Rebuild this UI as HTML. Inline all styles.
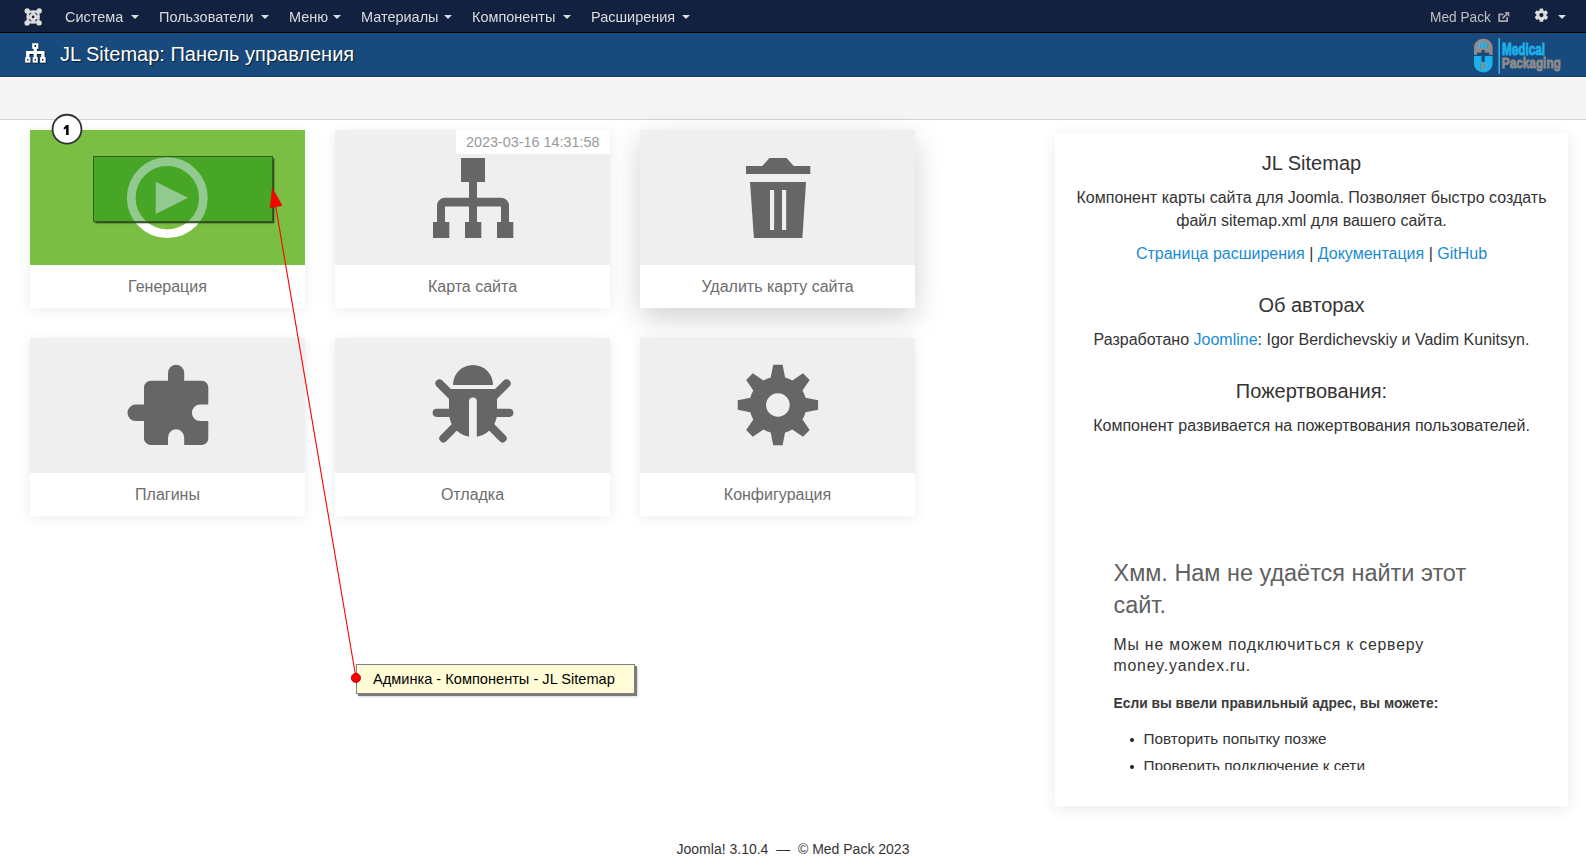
<!DOCTYPE html>
<html><head><meta charset="utf-8">
<style>
html,body{margin:0;padding:0;}
body{width:1586px;height:866px;overflow:hidden;position:relative;background:#fff;font-family:"Liberation Sans",sans-serif;}
.abs{position:absolute;}
#nav{left:0;top:0;width:1586px;height:32px;background:#11213f;border-bottom:1px solid #000;}
.ni{position:absolute;top:8.7px;font-size:15px;line-height:16px;color:#dcdcdc;white-space:nowrap;transform:scaleX(0.965);transform-origin:0 0;}
.caret{position:absolute;top:15px;width:0;height:0;border-left:4px solid transparent;border-right:4px solid transparent;border-top:4px solid #dcdcdc;}
#hdr{left:0;top:33px;width:1586px;height:43px;background:#184a7d;border-bottom:1px solid #0a3a6e;}
#sub{left:0;top:77px;width:1586px;height:41px;background:#f5f5f5;border-top:1px solid #fff;border-bottom:1px solid #d4d4d4;}
.card{position:absolute;width:275px;height:178px;background:#fff;box-shadow:0 2px 12px rgba(0,0,0,0.08);}
.card .ic{position:absolute;left:0;top:0;width:275px;height:135px;background:#efefef;}
.card .lb{position:absolute;left:0;top:135px;width:275px;height:43px;text-align:center;font-size:16px;line-height:43px;color:#6d6d6d;}
#panel{left:1055px;top:133px;width:513px;height:673px;background:#fff;box-shadow:0 3px 16px rgba(0,0,0,0.085);}
.pc{position:absolute;left:0;width:513px;text-align:center;color:#333;white-space:nowrap;}
.lk{color:#1a8bd0;}
#foot{left:0;top:841px;width:1586px;font-size:14px;color:#333;}
</style></head><body>

<div id="nav" class="abs">
  <svg class="abs" style="left:0;top:0" width="1586" height="32" viewBox="0 0 1586 32">
  <g fill="#050a15" opacity="0.55" transform="translate(0.5,0.7)">
    <circle cx="27.2" cy="11" r="2.7"/><circle cx="39.2" cy="10.9" r="2.7"/><circle cx="27.1" cy="23" r="2.7"/><circle cx="39.1" cy="22.9" r="2.7"/>
    <path d="M27.2,11 Q33.2,9.6 39.2,10.9 Q40.6,17 39.1,22.9 Q33.1,24.3 27.1,23 Q25.6,17 27.2,11 Z"/>
  </g>
  <g fill="#dcdcdc">
    <circle cx="27.2" cy="11" r="2.7"/><circle cx="39.2" cy="10.9" r="2.7"/><circle cx="27.1" cy="23" r="2.7"/><circle cx="39.1" cy="22.9" r="2.7"/>
    <path d="M27.2,11 Q33.2,9.6 39.2,10.9 Q40.6,17 39.1,22.9 Q33.1,24.3 27.1,23 Q25.6,17 27.2,11 Z"/>
  </g>
  <g stroke="#11213f" stroke-width="1.1" stroke-linecap="round" opacity="0.85">
    <line x1="29.4" y1="14.6" x2="30.8" y2="13.2"/><line x1="35.6" y1="13.2" x2="37" y2="14.6"/>
    <line x1="29.4" y1="19.5" x2="30.8" y2="20.9"/><line x1="35.6" y1="20.9" x2="37" y2="19.5"/>
  </g>
  <circle cx="33.1" cy="16.9" r="1.3" fill="#11213f"/>
  <!-- external link icon -->
  <g stroke="#a6a6a6" stroke-width="1.8" fill="none">
    <polyline points="1503.5,14.3 1499.2,14.3 1499.2,21.2 1507.1,21.2 1507.1,17.2"/>
    <line x1="1502.5" y1="18.3" x2="1507.5" y2="13.3"/>
  </g>
  <polygon points="1504.4,12.1 1509.3,12.1 1509.3,17" fill="#a6a6a6"/>
  <!-- gear 6 teeth -->
  <g fill="#dcdcdc">
    <circle cx="1541.4" cy="15.1" r="5.2"/>
    <rect x="1539.6" y="8.4" width="3.6" height="13.4" rx="0.6"/>
    <rect x="1539.6" y="8.4" width="3.6" height="13.4" rx="0.6" transform="rotate(60 1541.4 15.1)"/>
    <rect x="1539.6" y="8.4" width="3.6" height="13.4" rx="0.6" transform="rotate(120 1541.4 15.1)"/>
  </g>
  <circle cx="1541.4" cy="15.1" r="2.1" fill="#11213f"/>
</svg>
  <div class="ni" style="left:65px">Система</div><div class="caret" style="left:131px"></div>
  <div class="ni" style="left:159px">Пользователи</div><div class="caret" style="left:261px"></div>
  <div class="ni" style="left:289px">Меню</div><div class="caret" style="left:333px"></div>
  <div class="ni" style="left:361px">Материалы</div><div class="caret" style="left:444px"></div>
  <div class="ni" style="left:472px">Компоненты</div><div class="caret" style="left:563px"></div>
  <div class="ni" style="left:591px">Расширения</div><div class="caret" style="left:682px"></div>
  <div class="ni" style="left:1430px;font-size:14.2px;top:8.5px;color:#c0c0c0">Med Pack</div>
  <div class="caret" style="left:1558px"></div>
</div>

<div id="hdr" class="abs">
  <svg class="abs" style="left:0;top:-33px" width="1586" height="77" viewBox="0 0 1586 77">
    <defs><filter id="ds" x="-20%" y="-20%" width="140%" height="140%"><feDropShadow dx="1" dy="1" stdDeviation="0.5" flood-color="#000" flood-opacity="0.65"/></filter></defs>
    <g filter="url(#ds)" fill="#fff">
      <path fill-rule="evenodd" d="M32.2,43.2 H38.2 V48.7 H36.8 V51.1 H44.4 V57.2 H45.5 V62.4 H40.1 V57.2 H41.2 V53.9 H36.8 V57.2 H37.7 V62.4 H32.7 V57.2 H33.7 V53.9 H29.2 V57.2 H30.3 V62.4 H25.2 V57.2 H26.1 V51.1 H33.7 V48.7 H32.2 Z
        M34.3,45 H36.1 V46.9 H34.3 Z M27,59 H28.5 V60.7 H27 Z M34.4,59 H36 V60.7 H34.4 Z M42,59 H43.6 V60.7 H42 Z"/>
    </g>
    <!-- Medical Packaging logo -->
    <path d="M1474,54.8 V47 A9.3,8.3 0 0 1 1492.6,47 V54.8 Z" fill="#8c8c8c"/>
    <path d="M1474,56 V64 A9.3,8.5 0 0 0 1492.6,64 V56 Z" fill="#1cb1ec"/>
    <rect x="1477" y="52.6" width="12.2" height="3.4" fill="#184a7d"/>
    <rect x="1481.5" y="50" width="3.3" height="11.8" fill="#184a7d"/>
    <text x="1478.8" y="47.6" font-family="Liberation Sans" font-weight="bold" font-size="8.5" fill="#1cb1ec" stroke="#1cb1ec" stroke-width="0.5" textLength="8.8" lengthAdjust="spacingAndGlyphs">m</text>
    <text x="1480.6" y="68" font-family="Liberation Sans" font-weight="bold" font-size="9.5" fill="#8c8c8c" stroke="#8c8c8c" stroke-width="0.4">p</text>
    <rect x="1498.4" y="38" width="1.6" height="35.7" fill="#2ab3ea"/>
    <text x="1502" y="55.1" font-family="Liberation Sans" font-weight="bold" font-size="16" fill="#1cb1ec" stroke="#1cb1ec" stroke-width="0.9" textLength="43" lengthAdjust="spacingAndGlyphs">Medical</text>
    <text x="1501.8" y="68.2" font-family="Liberation Sans" font-weight="bold" font-size="14.5" fill="#8c8c8c" stroke="#8c8c8c" stroke-width="0.8" textLength="59" lengthAdjust="spacingAndGlyphs">Packaging</text>
  </svg>
  <div class="abs" style="left:60px;top:10px;font-size:20px;line-height:22px;color:#fff;text-shadow:1px 1px 1px rgba(0,0,0,0.6);white-space:nowrap">JL Sitemap: Панель управления</div>
</div>

<div id="sub" class="abs"></div>

<div class="card" style="left:30px;top:130px"><div class="ic" style="background:#7abf43"></div><div class="lb">Генерация</div></div>
<div class="card" style="left:335px;top:130px"><div class="ic"></div><div class="lb">Карта сайта</div></div>
<div class="card" style="left:640px;top:130px;box-shadow:0 10px 28px rgba(0,0,0,0.18)"><div class="ic"></div><div class="lb">Удалить карту сайта</div></div>
<div class="card" style="left:30px;top:338px"><div class="ic"></div><div class="lb">Плагины</div></div>
<div class="card" style="left:335px;top:338px"><div class="ic"></div><div class="lb">Отладка</div></div>
<div class="card" style="left:640px;top:338px"><div class="ic"></div><div class="lb">Конфигурация</div></div>


<!-- card icons -->
<svg class="abs" style="left:0;top:0" width="1586" height="866" viewBox="0 0 1586 866">
  <!-- play circle (white) -->
  <circle cx="167.3" cy="197.7" r="36.05" fill="none" stroke="#fff" stroke-width="8.7"/>
  <polygon points="155.7,181.8 188,197.7 155.7,214.1" fill="#fff"/>
  <!-- sitemap -->
  <g fill="#666">
    <rect x="461" y="158" width="24" height="24"/>
    <rect x="469" y="182" width="8" height="40"/>
    <path d="M437,222 L437,205.7 A8,8 0 0 1 445,197.7 L501,197.7 A8,8 0 0 1 509,205.7 L509,222 L501,222 L501,206.5 L445,206.5 L445,222 Z"/>
    <rect x="433" y="222" width="16.3" height="16"/>
    <rect x="465" y="222" width="16.3" height="16"/>
    <rect x="497" y="222" width="16.3" height="16"/>
  </g>
  <!-- trash -->
  <g fill="#666">
    <rect x="746" y="166" width="64.3" height="8"/>
    <polygon points="761.8,166.5 769.5,158 786.5,158 794.2,166.5"/>
    <polygon points="750,182 806,182 802.4,238 753.9,238"/>
  </g>
  <g fill="#efefef">
    <rect x="770" y="190" width="4.1" height="40"/>
    <rect x="782" y="190" width="4.2" height="40"/>
  </g>
  <!-- puzzle -->
  <g fill="#666">
    <rect x="144" y="380.8" width="64.3" height="64.2" rx="6.6"/>
    <path d="M168,381 V372.9 A8.1,8.1 0 0 1 184.2,372.9 V381 Z"/>
    <path d="M144,404.6 H135.75 A8.25,8.25 0 0 0 135.75,421.1 H144 Z"/>
  </g>
  <g fill="#efefef">
    <path d="M210,404.6 H200.15 A8.25,8.25 0 0 0 200.15,421.1 H210 Z"/>
    <path d="M168,445.2 V437.4 A8.1,8.1 0 0 1 184.2,437.4 V445.2 Z"/>
  </g>
  <!-- bug -->
  <g fill="#666">
    <path d="M453,385 A20,20 0 0 1 493,385 Z"/>
    <path d="M449,389 H497 V413 A24,24 0 0 1 449,413 Z"/>
  </g>
  <g stroke="#666" stroke-width="8.2" stroke-linecap="round" fill="none">
    <line x1="439.5" y1="383.5" x2="456" y2="400"/>
    <line x1="436.7" y1="412.8" x2="456" y2="412.8"/>
    <line x1="443.4" y1="438.3" x2="456" y2="425.7"/>
    <line x1="506.5" y1="383.5" x2="490" y2="400"/>
    <line x1="509.3" y1="412.8" x2="490" y2="412.8"/>
    <line x1="502.6" y1="438.3" x2="490" y2="425.7"/>
  </g>
  <rect x="469" y="397.5" width="7.8" height="45" rx="3.9" fill="#efefef"/>
  <!-- gear -->
  <path fill="#666" fill-rule="evenodd" d="M770.70,377.42 L773.20,364.80 L782.60,364.80 L785.10,377.42 A28.5,28.5 0 0 1 792.31,380.41 L803.00,373.25 L809.65,379.90 L802.49,390.59 A28.5,28.5 0 0 1 805.48,397.80 L818.10,400.30 L818.10,409.70 L805.48,412.20 A28.5,28.5 0 0 1 802.49,419.41 L809.65,430.10 L803.00,436.75 L792.31,429.59 A28.5,28.5 0 0 1 785.10,432.58 L782.60,445.20 L773.20,445.20 L770.70,432.58 A28.5,28.5 0 0 1 763.49,429.59 L752.80,436.75 L746.15,430.10 L753.31,419.41 A28.5,28.5 0 0 1 750.32,412.20 L737.70,409.70 L737.70,400.30 L750.32,397.80 A28.5,28.5 0 0 1 753.31,390.59 L746.15,379.90 L752.80,373.25 L763.49,380.41 A28.5,28.5 0 0 1 770.70,377.42 Z M789.70,405.0 A11.8,11.8 0 1 0 766.10,405.0 A11.8,11.8 0 1 0 789.70,405.0 Z"/>
</svg>

<!-- timestamp badge -->
<div class="abs" style="left:456px;top:130px;width:154px;height:24px;background:#fff;"></div>
<div class="abs" style="left:466px;top:134px;font-size:14.4px;line-height:16px;color:#999;white-space:nowrap">2023-03-16 14:31:58</div>

<!-- annotation rect on green card -->
<div class="abs" style="left:93px;top:156px;width:178px;height:64px;background:rgba(11,135,7,0.45);border:1px solid rgba(50,85,30,0.9);box-shadow:1.5px 1.5px 1.5px rgba(35,55,25,0.85);"></div>

<!-- red arrow + tooltip -->
<svg class="abs" style="left:0;top:0" width="1586" height="866" viewBox="0 0 1586 866">
  <line x1="356" y1="678" x2="275.3" y2="204" stroke="#f00" stroke-width="1.1"/>
  <polygon points="272.4,188.3 270.1,207.7 282.1,205.5" fill="#f00" stroke="#d00" stroke-width="0.5"/>
</svg>
<div class="abs" style="left:356px;top:664px;width:277px;height:28px;background:#fffcd6;border:1px solid #7f7f7f;box-shadow:2px 2px 0 #7a7a7a, 3px 3px 2px rgba(0,0,0,0.15);"></div>
<div class="abs" style="left:373px;top:671px;font-size:14.6px;line-height:17px;color:#000;white-space:nowrap">Админка - Компоненты - JL Sitemap</div>
<svg class="abs" style="left:0;top:0" width="1586" height="866" viewBox="0 0 1586 866">
  <circle cx="355.9" cy="677.9" r="4.6" fill="#f00" stroke="#900" stroke-width="0.8"/>
</svg>

<!-- step badge -->
<svg class="abs" style="left:0;top:0" width="1586" height="866" viewBox="0 0 1586 866">
  <circle cx="67" cy="129.2" r="14.45" fill="#fff" stroke="#333" stroke-width="1.8"/>
  <path d="M66.1,125 H68.6 V134.9 H66.1 V128.3 Q65,129.3 63.8,129.7 V127.5 Q65.3,126.8 66.1,125 Z" fill="#000"/>
</svg>

<div id="panel" class="abs">
  <div class="pc" style="top:19px;font-size:20px;line-height:22px">JL Sitemap</div>
  <div class="pc" style="top:53px;font-size:16px;line-height:23px">Компонент карты сайта для Joomla. Позволяет быстро создать<br>файл sitemap.xml для вашего сайта.</div>
  <div class="pc" style="top:109px;font-size:16px;line-height:23px"><span class="lk">Страница расширения</span> | <span class="lk">Документация</span> | <span class="lk">GitHub</span></div>
  <div class="pc" style="top:161px;font-size:20px;line-height:22px">Об авторах</div>
  <div class="pc" style="top:195px;font-size:16px;line-height:23px">Разработано <span class="lk">Joomline</span>: Igor Berdichevskiy и Vadim Kunitsyn.</div>
  <div class="pc" style="top:247px;font-size:20px;line-height:22px">Пожертвования:</div>
  <div class="pc" style="top:281px;font-size:16px;line-height:23px">Компонент развивается на пожертвования пользователей.</div>
</div>


<!-- embedded error page -->
<div class="abs" style="left:1075px;top:460px;width:470px;height:310px;overflow:hidden;color:#333;">
  <div class="abs" style="left:38.5px;top:98px;font-size:23.45px;line-height:31.5px;color:#606060;white-space:nowrap;">Хмм. Нам не удаётся найти этот<br>сайт.</div>
  <div class="abs" style="left:38.5px;top:174px;font-size:15.8px;line-height:21px;letter-spacing:0.82px;color:#333;white-space:nowrap;">Мы не можем подключиться к серверу<br>money.yandex.ru.</div>
  <div class="abs" style="left:38.5px;top:236px;font-size:13.8px;line-height:16px;font-weight:bold;color:#3a3a3a;white-space:nowrap;">Если вы ввели правильный адрес, вы можете:</div>
  <div class="abs" style="left:55.3px;top:277.6px;width:4px;height:4px;border-radius:50%;background:#222;"></div>
  <div class="abs" style="left:68.5px;top:270px;font-size:15.3px;line-height:17px;color:#333;white-space:nowrap;">Повторить попытку позже</div>
  <div class="abs" style="left:55.3px;top:304.5px;width:4px;height:4px;border-radius:50%;background:#222;"></div>
  <div class="abs" style="left:68.5px;top:297px;font-size:15.3px;line-height:17px;color:#333;white-space:nowrap;">Проверить подключение к сети</div>
</div>

<div id="foot" class="abs" style="text-align:center;white-space:pre">Joomla! 3.10.4  —  © Med Pack 2023</div>

</body></html>
